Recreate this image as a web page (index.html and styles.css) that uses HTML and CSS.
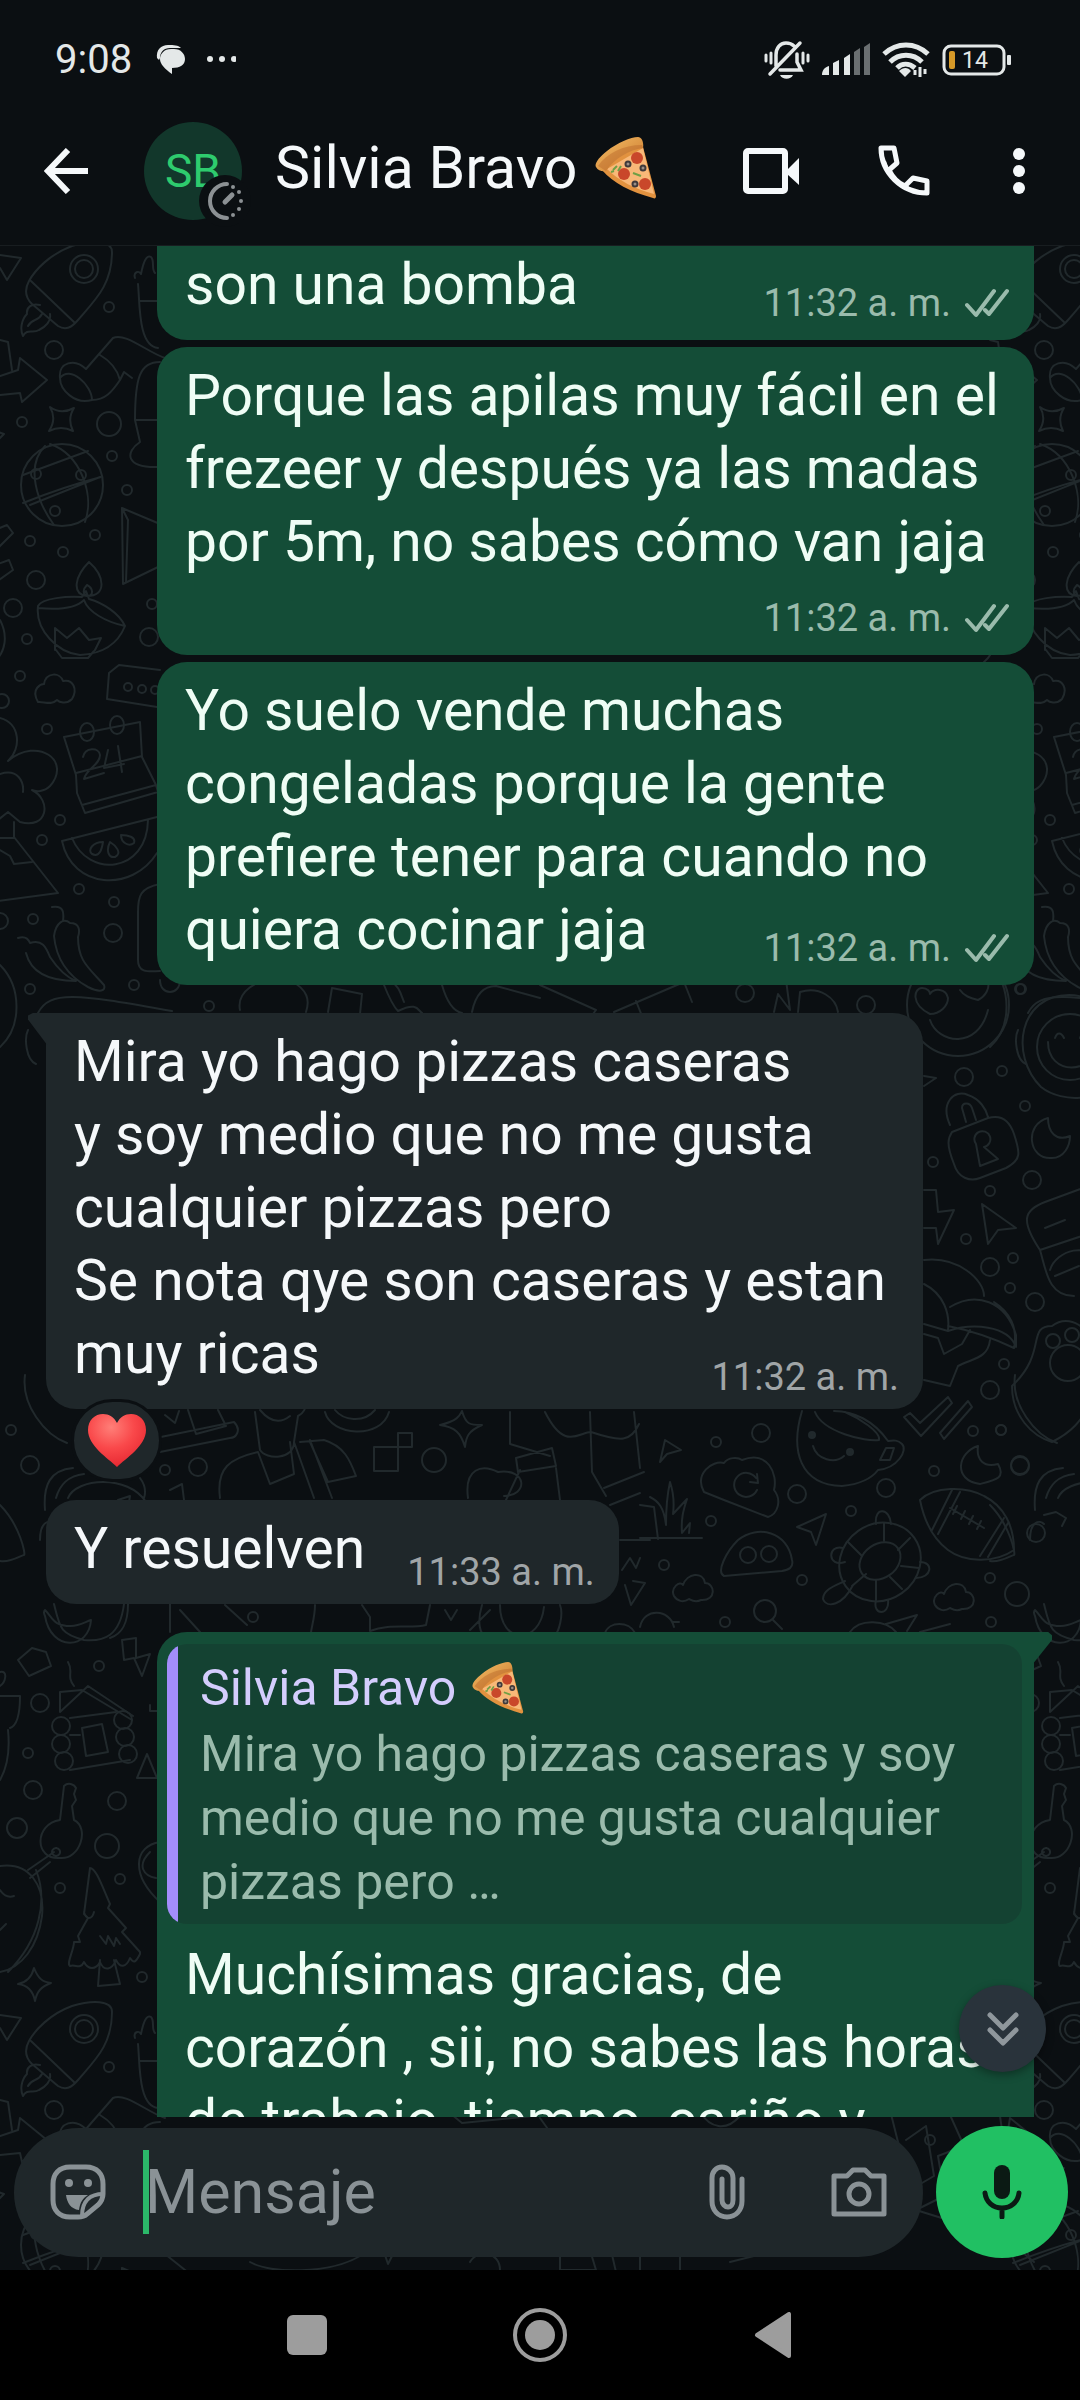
FILE: index.html
```html
<!DOCTYPE html>
<html lang="es">
<head>
<meta charset="utf-8">
<meta name="viewport" content="width=device-width, initial-scale=1">
<title>Silvia Bravo</title>
<link rel="stylesheet" href="styles.css">
</head>
<body>
<svg class="defs" width="0" height="0" aria-hidden="true">
  <defs>
    <linearGradient id="crust" x1="0" y1="0" x2="1" y2="1"><stop offset="0" stop-color="#f6c069"/><stop offset="1" stop-color="#c9762a"/></linearGradient>
    <radialGradient id="heartFill" cx=".4" cy=".25" r=".8"><stop offset="0" stop-color="#ff7f78"/><stop offset=".5" stop-color="#f9484a"/><stop offset="1" stop-color="#e5252f"/></radialGradient>
    <symbol id="pizza" viewBox="0 0 62 62">
      <path d="M5 30 47 6l14 53c0 2-1 3-3 2C36 55 18 46 7 33z" fill="#e2923f"/>
      <path d="M12 32 48 11l11 46C40 52 24 44 12 32z" fill="#f8b878"/>
      <path d="M1 30C-1 27 4 20 12 14 22 6 36 0 43 0c4 0 6 6 5 11C34 13 20 21 11 34c-3 1-8 0-10-4z" fill="url(#crust)"/>
      <path d="M3 29C12 16 28 8 47 8l1 3C34 13 20 21 11 34z" fill="#b9652a" opacity=".45"/>
      <circle cx="42" cy="21" r="6" fill="#c9472a"/><circle cx="29" cy="37" r="6" fill="#c9472a"/><circle cx="50" cy="47" r="6" fill="#c9472a"/>
      <g fill="#9a8f86" stroke="#3f3a3b" stroke-width="2"><circle cx="33" cy="27" r="2.500"/><circle cx="48" cy="31" r="2.500"/><circle cx="40" cy="47" r="2.500"/></g>
      <path d="M18 33l4-4m1 5 3-5m12 7 8 3m-30-4 3-1" stroke="#6f9f45" stroke-width="2" fill="none"/>
    </symbol>
    <symbol id="ticks" viewBox="0 0 44 30">
      <path d="M2 17 11 27 29 3M20 22l4 4L42 3" fill="none" stroke="currentColor" stroke-width="4" stroke-linecap="round" stroke-linejoin="round"/>
    </symbol>
  </defs>
</svg>

<header class="top">
  <div class="status">
    <span class="clock">9:08</span>
    <svg class="notif" width="80" height="32" viewBox="0 0 80 32" fill="#e4e8e8">
      <path d="M1 14C0 6 5 1 12 1c6 0 10 0 13 3H14C8 4 4 8 4 14l-1 2z"/><path d="M15 5h3c7 0 11 5 11 10 0 6-5 9-13 9v6C9 25 4 20 4 15S8 5 15 5z"/>
      <circle cx="54" cy="15" r="3"/><circle cx="66" cy="15" r="3"/><circle cx="78" cy="15" r="3"/>
    </svg>
    <span class="spacer"></span>
    <svg width="46" height="40" viewBox="0 0 46 40" fill="none" stroke="#e4e8e8" stroke-width="3.500" stroke-linecap="round">
      <path d="M12 26V15c0-7 4-12 10-12 4 0 6 1 8 3M33 14v8l4 8H16M6 34 36 3"/><path d="M2 15v6M7 13v10M39 13v10M44 15v6" stroke-width="3"/><path d="M16 35h13c-2 5-11 5-13 0z" fill="#e4e8e8" stroke="none"/>
    </svg>
    <svg width="48" height="34" viewBox="0 0 48 34" fill="#e4e8e8">
      <path d="M0 32c0-5 3-8 7-9v9zM11 32V20l6-3v15zM22 32V15l6-4v21z"/><path d="M32 32V9l6-4v27zM42 32V4l6-4v32z" fill="#6a6f71"/>
    </svg>
    <svg width="48" height="38" viewBox="0 0 48 38" fill="none" stroke="#e4e8e8" stroke-width="5">
      <path d="M2 13c13-12 31-12 44 0M8 21c9-9 23-9 32 0M15 27c5-5 12-5 18 0"/><path d="M17 30c4-4 9-4 12 0l-6 6z" fill="#e4e8e8" stroke="none"/><path d="M33 29v5m5-8v10m5-8v5" stroke-width="3"/>
    </svg>
    <svg width="70" height="32" viewBox="0 0 70 32">
      <rect x="2" y="2" width="60" height="28" rx="7" fill="none" stroke="#e4e8e8" stroke-width="3"/><rect x="7" y="7" width="6" height="18" rx="2" fill="#d79a28"/><rect x="65" y="11" width="4" height="10" rx="1" fill="#e4e8e8"/>
      <text x="20" y="24" font-family="Roboto, sans-serif" font-size="23" fill="#e4e8e8">14</text>
    </svg>
  </div>
  <div class="appbar">
    <button class="icon back" aria-label="Atrás"><svg width="44" height="46" viewBox="0 0 44 46" fill="none" stroke="currentColor" stroke-width="6"><path d="M24 2 4 23l20 21M4 23h40"/></svg></button>
    <div class="avatar"><span>SB</span>
      <svg class="timer" width="52" height="52" viewBox="0 0 52 52"><circle cx="26" cy="26" r="26" fill="#0b0f12"/><path d="M28 9a17 17 0 1 0 0 34" fill="none" stroke="#8c9194" stroke-width="4" stroke-linecap="round"/><path d="m26 27 7-7" stroke="#8c9194" stroke-width="5" stroke-linecap="round"/><g fill="#8c9194"><circle cx="34" cy="12" r="2"/><circle cx="40" cy="17" r="2"/><circle cx="42" cy="26" r="2"/><circle cx="40" cy="34" r="2"/><circle cx="34" cy="40" r="2"/></g></svg>
    </div>
    <h1 class="title">Silvia Bravo <svg class="pizza" role="img" aria-label="pizza"><use href="#pizza"/></svg></h1>
    <span class="spacer"></span>
    <nav class="actions">
      <button class="icon" aria-label="Videollamada"><svg width="56" height="46" viewBox="0 0 56 46"><rect x="3" y="3" width="39" height="40" rx="2" fill="none" stroke="currentColor" stroke-width="6"/><path d="M44 22 56 10v27L44 26z" fill="currentColor"/></svg></button>
      <button class="icon" aria-label="Llamar"><svg width="52" height="52" viewBox="0 0 52 52" fill="none" stroke="currentColor" stroke-width="5" stroke-linejoin="round"><path d="M3 3h13l3 15-8 7c4 8 9 13 16 16l8-8 14 3v12C24 48 3 28 3 3z"/><path d="M10 24 7 16M29 42l8 4" stroke-width="2"/></svg></button>
      <button class="icon" aria-label="Más opciones"><svg width="12" height="46" viewBox="0 0 12 46" fill="currentColor"><circle cx="6" cy="6" r="6"/><circle cx="6" cy="23" r="6"/><circle cx="6" cy="40" r="6"/></svg></button>
    </nav>
  </div>
</header>

<div class="conversation">
  <svg class="wallpaper" aria-hidden="true">
    <g transform="translate(0 -246)" fill="none" stroke="#21292c" stroke-width="2" stroke-linejoin="round" stroke-linecap="round">
      <g id="doodles">
        <path d="M-8 254 21 258 7 280 0 268M72 246C50 254 35 270 29 281c-5 9-3 17 3 23l26 22c8 5 14 1 20-6 17-20 34-35 34-68 0-12-20-12-40-6zM31 281l44 42M40 305c-8-2-14 2-13 9-6 6-7 16-4 22 4-8 10-2 16-6 8-4 12-10 11-16M28 326c4-8 10-4 14-12"/>
        <circle cx="84" cy="269" r="14"/><circle cx="84" cy="269" r="9"/>
        <path d="M135 278c-2-6 4-8 6-4 2-10 5-20 10-17 4 4 0 12 4 16M138 284c2 20 0 62 20 64M140 301h20M60 378c-2-16 15-20 26-9l27-31c12-6 34 14 52 20M60 378c10-13 32 7 32 22-17 5-32-10-32-22zM100 355c12 7 18 17 20 25-8 12-15 20-28 20M120 380l4-8 8 6M0 376l18-6 2-12 27 22-25 22-2-9-20 2M0 340l8 2 4 28M160 362c-20 0-25 15-25 58l5 22c-15 10-15 26 18 25M136 420h22"/>
        <path d="M50 407q11 8 24 1-7 11-1 23-12-6-24 0 8-12 1-24zM-8 430l12 4-8 8"/>
        <circle cx="62" cy="485" r="41"/><path d="M23 475 88 451M30 505l70-28M23 503c30-12 55-20 78-26M45 446c-20 20-8 56 9 79M50 444c30 10 45 50 35 78"/><circle cx="36" cy="474" r="5"/><circle cx="81" cy="475" r="5"/><circle cx="55" cy="511" r="5"/>
        <path d="M160 524 122 508l1 76 35-17M122 508l6 12-2 62M-5 530l12-5 6 8-14 14M-5 565l14-5 4 10-14 10M89 562c-14 14-18 32-2 34 20 0 18-20 2-34zM87 585c-5 5-4 10 1 11 6-1 5-8-1-11zM38 606c4-8 30-10 44-9l4-6 3 8c14 4 30 14 36 27-8 20-25 28-45 29-22-2-45-25-42-49zM38 608c20 2 38 0 46-8 4 12 22 22 41 26M55 650l0-22 12 10 12-10 10 12 12-2-6 12M56 650l6 8h26l6-7M0 620c8 15 6 32-6 42"/>
        <path d="M38 702c-8-14 4-18 6-18 2-12 16-12 19-3 10-2 15 8 9 18-6 6-13 3-15 1-6 6-14 1-19 2zM160 670l-41-5-10 8-2 26 50 8"/><circle cx="128" cy="687" r="4"/><circle cx="142" cy="689" r="4"/><circle cx="155" cy="690" r="4"/>
        <path d="M64 737 140 722l2 35 14 28 2 7-73 21-8-20-1-18zM76 773l66-17M82 805l74-20M83 757c2-10 16-10 17-2 0 10-14 14-16 24l20-6M108 750l-4 18 20-4M118 746l4 26"/><ellipse cx="87" cy="732" rx="7" ry="9"/><ellipse cx="117" cy="725" rx="7" ry="9"/>
        <path d="M0 718c20 5 22 30 8 43 30-25 64 0 42 25-6 6-14 6-18 4 20 10 16 40-12 32l-12-10-10 8M0 774c18-6 24 8 23 18M14 822v15L58 893l-60 8M0 838h14M0 850l10 6 4 8 18-2M62 841l95-24M62 841c10 48 70 52 95 12M72 838c16 40 75 36 76-18M103 842c-10 0-16 8-11 12 8 4 10-6 11-12zM110 842c-4 8-2 16 5 15 8-4 0-12-5-15zM121 835c0 8 8 12 13 8 2-6-6-8-13-8z"/>
        <path d="M52 907c12-2 12 6 11 14M54 936c2-14 10-18 16-13 10 0 10 8 8 14 0 24 10 30 26 48 2 6-4 8-16 2-22-12-32-30-34-51zM18 938c6-2 10 0 12 5 12-4 16 4 20 14 8 12 16 20 26 24-20 0-44-4-50-28M0 965c22 22 22 62 0 82M160 884c-20 4-22 12-22 28v48c0 12 8 12 22 11M38 1013c12-24 42-18 134-2M160 980c0 16 20 16 20 0M240 1010c-4-20 20-30 30-30h20c18 10 20 20 16 32M328 1012l4-24 30 6-2 20M384 985c4 10 8 20 14 26 20-10 20 0 24 2M390 980c10 8 10 12 14 22M442 985c4 14 10 26 20 28M472 1012c4-20 14-26 24-26l44 12M540 985l56 25-6 8M614 1012l70-30 8 20M636 1001l8 20M774 1012l4-18 12 16-4-30M798 1012l2-20c20-6 36 6 38 20M28 1030c-4 8-2 30 8 34"/>
        <circle cx="958" cy="1005" r="51"/><path d="M930 1020c8 24 48 30 58-10M930 1014c-20-10-16-26-8-26 6 0 8 4 8 6 4-6 16-6 18 4 0 8-8 16-18 16zM960 990c4 6 10 8 18 10 8-4 12-12 10-20"/>
        <path d="M1069 995c-50 0-60 60-28 92 20 16 70 20 80-28 4-34-22-64-52-64z"/><circle cx="1070" cy="1047" r="33"/><path d="M1055 1038c2-6 6-6 9 0M1080 1038c2-6 6-6 9 0M1048 1042c0 34 46 34 50 0"/>
        <path d="M950 1125c-10-22 4-36 18-30 12 4 18 14 20 22M966 1122l-4-14c0-6 8-6 10 0l4 12M952 1132l36-14c14-4 22 4 26 16 6 18 8 26-8 34l-26 10c-10 4-22 0-26-14-8-20-6-26-2-32zM976 1144l4 22 18-7-14-12a8 8 0 1 0-8-3zM1048 1118c-24 6-20 42 4 40 12 0 18-12 18-22-14 6-22-4-22-18zM924 1076l12 2-12 8M924 1190h12l2 22 16-2-16 34-2-16h-12M982 1204l34 24-18 2-10 14zM1040 1250c-20-30-16-40 5-48l60-22M1040 1250l60-20M1040 1250c6 20 8 46 34 46M1045 1228l20-8M1055 1276l24-10M1050 1270c6-20 40-30 50-5M924 1260c34-4 60 20 60 36M924 1284c20 10 26 30 24 46M924 1324l24 7c24-8 60-6 68 16l0-12c-10-34-40-44-66-28M948 1326c20 4 45 12 66 22 4-20-4-36-20-46M924 1334l14 4 6 16 18-10 8-14M924 1380l26 6 8-20c16-8 30-8 32-26M1012 1386c36-34 14-60 40-60 18-14 40 4 38 20M1012 1386c0 30 20 50 40 56 20-10 28-20 40-40"/><circle cx="1053" cy="1341" r="7"/><circle cx="1072" cy="1335" r="7"/><circle cx="1068" cy="1363" r="18"/>
        <path d="M904 1417l6-4 10 10 28-26 4 6-31 33zM940 1433l28-32 4 6-28 32zM802 1411c-12 40-2 74 40 75 20-2 30-8 36-16 20-2 30-20 24-26-4-4-8-4-14-3-14-20-34-30-54-30M815 1412c8 20 50 30 64 28 2-8-20-22-34-28M813 1446c4 14 22 18 31 10M880 1460l6-12h8l-4 12z"/><circle cx="812" cy="1435" r="3" fill="#21292c"/><circle cx="850" cy="1452" r="3" fill="#21292c"/>
        <path d="M665 1440l16 10-14 4-7 8zM704 1492c-10-18 8-32 20-29 4-6 14-6 18-3 26-10 36 14 32 30 8 10 4 24-6 27l-44-17zM756 1478a12 12 0 1 0 1 12M757 1474l1 9-8-1M724 1576c-8-4 2-24 14-36 20-16 50-8 54 20 2 8-4 10-10 11z"/><circle cx="748" cy="1555" r="8"/><circle cx="769" cy="1554" r="8"/>
        <path d="M640 1505l14 2 4 32M650 1497c8 4 14 10 16 28 0-20 2-34 4-43 4 12 4 24 3 32l14-15c-4 12-6 20-5 34l8-10-1 10M640 1538h62"/>
        <path d="M674 1596c-4-8 6-16 9-11 4-12 20-14 22-2 10 0 12 18-4 17-6 3-10 0-12-1-6 4-12 2-15-3zM935 1605c-4-8 6-16 9-11 4-12 20-14 22-2 10 0 12 18-4 17-6 3-10 0-12-1-6 4-12 2-15-3z"/><circle cx="765" cy="1611" r="11"/><path d="M773 1620l9 9M797 1527l29-13-10 31-5-13zM640 1627c4-20 30-18 34 0M673 1622h6M978 1446c-20 6-26 34 2 38 16-4 26-6 18-20-14 4-22-4-20-18M920 1500c14-14 46-14 64-4 20 10 30 30 30 54-20 14-50 12-66 0-16-12-24-30-28-50zM952 1490l-20 40M960 1492l-22 42M980 1556l24-38M988 1557l20-34M950 1508l34 20M957 1506l-4 8M965 1511l-4 8M973 1516l-4 8M981 1521l-4 8"/>
        <ellipse cx="880" cy="1562" rx="42" ry="38" transform="rotate(-35 880 1562)"/><ellipse cx="880" cy="1561" rx="22" ry="17" transform="rotate(-35 880 1561)"/><path d="M884 1541v-18M898 1550l12-12M901 1566l18 2M890 1577l12 12M876 1580v20M866 1574l-14 12M862 1556l-14-14M876 1524c-2-18 14-16 15 0M845 1562c-18 6-18-18-2-14M853 1585c-10 20-26 24-30 14 0-10 14-14 22-18M876 1600c-4 16 14 16 12 0M916 1578c16 0 18-16 4-16M850 1632c10-14 36-12 46 0M886 1624l31-9-10 16M920 1632l30-8"/>
        <path d="M25 1375c-4 30 20 60 42 68M0 1505c20 20 26 50 24 50s-14 8-24 6M45 1510c-2-25 5-40 28-42M56 1498c4-14 12-22 28-24M140 1478c6 8 6 14 4 20M68 1498c8-20 60-24 78 4M118 1500l12-4-2 12M170 1490l12-6 2 16M40 1540c0-20 10-20 14-16M54 1515l12-3 10 6-4 8M156 1438l78-16c8 8 2 16-4 16l-70 14M165 1415l10 8 4-12M188 1410l8 24 30-8-8-16M255 1412l5 38c6 10 34 10 34-8l4-26c12-6 8-20-6-18M220 1498c-4-30 10-40 38-46l12 32 24-10-4-32M300 1442l24-2c20 6 26 20 32 36l-28 6-18-40M294 1442l20 56M310 1440l22 58M260 1410c10 12 20 14 30 6M325 1412c6 24 56 28 64 0M335 1410c8 10 28 14 40 0"/><path d="M374 1447h24v24h-24zM398 1433h14v14h-14zM440 1425c18-4 20-10 22-14 4 14 8 14 20 14-14 6-16 12-17 22-4-14-10-20-25-22zM510 1412v32l40 12M516 1458l36-10 4 18-38 6zM520 1470l-14 30M556 1468l4 32M468 1498c-4-30 14-34 30-26 30-4 30 24 6 24M590 1412l2 60 14 24M634 1412l6 56M545 1412c20 40 34 20 46 20 30 10 40 10 48-8M604 1488l40-16M610 1505l30-12M620 1540h30M622 1570l8-12 6 10 4-10M625 1585l6 20 14-22-12-2"/>
        <path d="M54 1604c6 24 6 30 30 36 20 2 36-4 40-36M128 1604c0 20-6 30-18 34M45 1610c8 8 8 16 26 16 8 0 14-4 20-6-2 30-40 32-46-4-2-4 0-6 0-6zM170 1604v28M180 1610l20 22M225 1605l22 20M315 1605c0 12-4 24-4 28M362 1605l8 12v14c20-8 40-2 56-6l4-20M445 1610l6 10 6-10M470 1630l20-20M482 1605c-6 20 0 28 0 28M560 1605c4 10-2 28-4 28M500 1605c0 40 40 40 44 2M605 1633c4-12 24-12 30 0"/>
        <path d="M18 1660l14-12 14 4 5 14-22 10zM0 1672c8-2 6 10 0 14M122 1640l14-2v20l14-4-8 22-8-18-10 2zM68 1662c6 10-2 14 6 24M60 1692l22-2 50 30M60 1692v20l28-26 45 30M70 1718l46-6M70 1735h10M70 1770l60-10M82 1728l20-4 6 28-22 4zM0 1696h20c0 20-4 30-10 32M0 1780c8-14 10-30 8-50M150 1705v6h7M137 1778h20l-10-24z"/><circle cx="61" cy="1726" r="9"/><circle cx="123" cy="1720" r="9"/><circle cx="61" cy="1744" r="9"/><circle cx="125" cy="1737" r="9"/><circle cx="64" cy="1761" r="9"/><circle cx="128" cy="1754" r="9"/>
        <path d="M60 1820l4-34c4-4 10-2 12 2l-2 6 2 6-4 6 2 14c16 8 6 40-14 38-26 2-26-34 0-38zM56 1848a4 4 0 1 0 .1 0M54 1852l-26 18M50 1862l-20 16M0 1866c30-4 45 20 42 50-4 30-20 52-42 56M36 1870c12 30 4 70-28 102M0 1930l6-6M0 1890c4 6 8 8 14 6M160 1842c-26 4-30 32 0 60M150 1852c-14 14-6 24 6 26"/>
        <path d="M90 1868c6 0 12 18 20 36l-2 4 18 20-4 4 18 20 0 2c-4 8-6 10-10 4-4 10-10 10-14 2-4 10-12 12-16 2-4 8-12 8-16 0-4 8-8 2-14 4-4-2 4-16 4-24l6 0-2-6 10-18-4-4zM100 1960l-2 26 22-2-6-24M84 1912c2 8 8 8 10 0M100 1936l6 8 2-8 6 10 2-8 4 6M34 1968c4 10 8 14 17 15-10 4-14 8-16 18-2-10-8-16-17-17 10-2 14-8 16-16z"/>
        <path d="M240 2030h60v60h-60zM440 2105l22 18 80-8M540 2118l10 14M610 2020c20-10 40 6 50-12M700 2112c10 16 26 20 40 4M890 2110l20 80 24-14-8-50-20 14M946 2106l18 40-26 10 4 24M916 2210l40-20-8 30zM970 2240c-20-10-10-30 4-28l60 50M250 2262c20 12 80 12 110-6M560 2250h30l6 20h-36zM610 2246l6 26M640 2250v22M680 2250v22M160 2250l30 24M730 2262l40-10M380 2240l8 24 10-20M470 2262c8-14 30-10 30 8"/>
        <g><circle cx="109" cy="307" r="5"/><circle cx="54" cy="350" r="9"/><circle cx="22" cy="422" r="5"/><circle cx="109" cy="424" r="12"/><circle cx="112" cy="456" r="5"/><circle cx="127" cy="490" r="5"/><circle cx="95" cy="535" r="5"/><circle cx="30" cy="541" r="5"/><circle cx="63" cy="552" r="5"/><circle cx="36" cy="580" r="9"/><circle cx="13" cy="608" r="9"/><circle cx="152" cy="604" r="5"/><circle cx="149" cy="637" r="9"/><circle cx="27" cy="639" r="5"/><circle cx="20" cy="676" r="5"/><circle cx="2" cy="701" r="7"/><circle cx="47" cy="729" r="5"/><circle cx="60" cy="820" r="5"/><circle cx="42" cy="840" r="5"/><circle cx="79" cy="889" r="5"/><circle cx="114" cy="902" r="5"/><circle cx="33" cy="919" r="5"/><circle cx="113" cy="933" r="9"/><circle cx="0" cy="921" r="8"/><circle cx="134" cy="985" r="5"/><circle cx="30" cy="989" r="5"/><circle cx="209" cy="1006" r="5"/><circle cx="745" cy="993" r="9"/><circle cx="866" cy="1005" r="9"/><circle cx="1021" cy="989" r="5"/><circle cx="964" cy="1077" r="9"/><circle cx="1002" cy="1071" r="5"/><circle cx="1025" cy="1106" r="5"/><circle cx="933" cy="1162" r="5"/><circle cx="1032" cy="1180" r="9"/><circle cx="990" cy="1191" r="5"/><circle cx="966" cy="1239" r="5"/><circle cx="1013" cy="1258" r="5"/><circle cx="990" cy="1267" r="9"/><circle cx="1010" cy="1288" r="5"/><circle cx="1035" cy="1302" r="9"/><circle cx="1004" cy="1364" r="5"/><circle cx="990" cy="1390" r="9"/><circle cx="973" cy="1431" r="5"/><circle cx="1001" cy="1430" r="5"/><circle cx="761" cy="1433" r="9"/><circle cx="716" cy="1442" r="5"/><circle cx="797" cy="1494" r="9"/><circle cx="886" cy="1488" r="9"/><circle cx="851" cy="1511" r="5"/><circle cx="711" cy="1521" r="5"/><circle cx="664" cy="1565" r="5"/><circle cx="802" cy="1580" r="5"/><circle cx="725" cy="1622" r="5"/><circle cx="934" cy="1471" r="5"/><circle cx="1020" cy="1466" r="9"/><circle cx="1036" cy="1533" r="9"/><circle cx="990" cy="1578" r="5"/><circle cx="1017" cy="1594" r="12"/><circle cx="991" cy="1622" r="5"/><circle cx="30" cy="1465" r="9"/><circle cx="11" cy="1430" r="5"/><circle cx="165" cy="1470" r="5"/><circle cx="198" cy="1467" r="9"/><circle cx="434" cy="1460" r="12"/><circle cx="253" cy="1617" r="5"/><circle cx="99" cy="1666" r="5"/><circle cx="40" cy="1703" r="9"/><circle cx="28" cy="1753" r="5"/><circle cx="33" cy="1790" r="9"/><circle cx="117" cy="1801" r="9"/><circle cx="17" cy="1828" r="10"/><circle cx="107" cy="1846" r="12"/><circle cx="60" cy="1888" r="5"/><circle cx="120" cy="1879" r="5"/><circle cx="142" cy="1977" r="5"/><circle cx="930" cy="2140" r="5"/></g>
      </g>
      <use href="#doodles" x="990"/><use href="#doodles" y="1760"/><use href="#doodles" x="990" y="1760"/>
    </g>
  </svg>

  <main class="chat">
    <article class="bubble sent continued">
      <p class="text">son una bomba</p>
      <div class="meta"><time>11:32 a. m.</time><svg class="ticks"><use href="#ticks"/></svg></div>
    </article>
    <article class="bubble sent stacked">
      <p class="text">Porque las apilas muy fácil en el frezeer y después ya las madas por 5m, no sabes cómo van jaja</p>
      <div class="meta"><time>11:32 a. m.</time><svg class="ticks"><use href="#ticks"/></svg></div>
    </article>
    <article class="bubble sent">
      <p class="text">Yo suelo vende muchas congeladas porque la gente prefiere tener para cuando no quiera cocinar jaja</p>
      <div class="meta"><time>11:32 a. m.</time><svg class="ticks"><use href="#ticks"/></svg></div>
    </article>
    <article class="bubble received first">
      <p class="text">Mira yo hago pizzas caseras<br>y soy medio que no me gusta cualquier pizzas pero<br>Se nota qye son caseras y estan muy ricas</p>
      <div class="meta"><time>11:32 a. m.</time></div>
    </article>
    <button class="reaction" aria-label="Reacción: corazón"><svg width="58" height="54" viewBox="0 0 58 54"><path d="M29 53C20 44 0 32 0 16 0 6 7 0 15 0c6 0 11 3 14 9C32 3 37 0 43 0c8 0 15 6 15 16 0 16-20 28-29 37z" fill="url(#heartFill)"/></svg></button>
    <article class="bubble received inline">
      <p class="text">Y resuelven</p>
      <div class="meta"><time>11:33 a. m.</time></div>
    </article>
    <article class="bubble sent first quoted">
      <blockquote class="quote">
        <cite>Silvia Bravo <svg class="pizza" role="img" aria-label="pizza"><use href="#pizza"/></svg></cite>
        <p>Mira yo hago pizzas caseras y soy medio que no me gusta cualquier pizzas pero …</p>
      </blockquote>
      <p class="text">Muchísimas gracias, de<br>corazón , sii, no sabes las horas<br>de trabajo, tiempo, cariño y</p>
    </article>
  </main>
  <button class="jump" aria-label="Ir al final"><svg width="34" height="36" viewBox="0 0 34 36" fill="none" stroke="#8f979c" stroke-width="5" stroke-linecap="round" stroke-linejoin="round"><path d="M4 4l13 13L30 4M4 19l13 13 13-13"/></svg></button>

  <form class="composer">
    <div class="field">
      <button class="tool" type="button" aria-label="Stickers"><svg width="56" height="56" viewBox="0 0 56 56" fill="none" stroke="currentColor" stroke-width="5"><path d="M20 3h16c11 0 17 7 17 17v10c0 5-2 8-5 11L37 50c-3 3-6 3-9 3h-8C9 53 3 46 3 36V20C3 10 9 3 20 3z"/><path d="M53 30c-12 0-21 6-21 22" stroke-width="4"/><path d="M16 31h22c-5 3-8 7-9 15-8-1-12-7-13-15z" fill="currentColor" stroke="none"/><circle cx="19" cy="19" r="4" fill="currentColor" stroke="none"/><circle cx="38" cy="19" r="4" fill="currentColor" stroke="none"/></svg></button>
      <span class="caret"></span>
      <input class="input" type="text" placeholder="Mensaje" aria-label="Mensaje">
      <button class="tool" type="button" aria-label="Adjuntar"><svg width="36" height="56" viewBox="0 0 36 56" fill="none" stroke="currentColor" stroke-width="5" stroke-linecap="round"><path d="M33 15v22c0 9-6 16-15 16S3 46 3 37V14C3 8 7 3 13 3s11 5 11 11v22c0 4-2 7-5 7s-6-3-6-7V15"/></svg></button>
      <button class="tool" type="button" aria-label="Cámara"><svg width="56" height="50" viewBox="0 0 56 50" fill="none" stroke="currentColor" stroke-width="5" stroke-linejoin="round"><path d="M3 9h13l6-6h12l6 6h13v38H3z"/><circle cx="28" cy="27" r="10"/></svg></button>
    </div>
    <button class="mic" type="button" aria-label="Mensaje de voz"><svg width="40" height="54" viewBox="0 0 40 54"><rect x="12" y="0" width="16" height="34" rx="8" fill="#0b1a14"/><path d="M3 28c1 9 8 15 17 15s16-6 17-15M20 43v9" fill="none" stroke="#0b1a14" stroke-width="5" stroke-linecap="round"/></svg></button>
  </form>
</div>

<nav class="system">
  <button aria-label="Recientes"><svg width="40" height="40"><rect width="40" height="40" rx="6" fill="#9d9d9d"/></svg></button>
  <button aria-label="Inicio"><svg width="54" height="54" viewBox="0 0 54 54"><circle cx="27" cy="27" r="25" fill="none" stroke="#9d9d9d" stroke-width="4"/><circle cx="27" cy="27" r="15" fill="#9d9d9d"/></svg></button>
  <button aria-label="Volver"><svg width="38" height="46" viewBox="0 0 38 46"><path d="M35 2v42L3 23z" fill="#9d9d9d" stroke="#9d9d9d" stroke-width="4" stroke-linejoin="round"/></svg></button>
</nav>
</body>
</html>
```
FILE: styles.css
```css
* { box-sizing: border-box; }

body {
  margin: 0;
  height: 100vh;
  display: flex;
  flex-direction: column;
  background: #0b0f12;
  color: #f5f8fa;
  font-family: Roboto, "Noto Sans", sans-serif;
}

button {
  padding: 0;
  border: 0;
  background: none;
  color: inherit;
  display: flex;
  align-items: center;
  justify-content: center;
}

svg { display: block; flex: none; }
.defs { position: absolute; }
.spacer { flex: 1; }

/* Header */
.top { border-bottom: 1px solid #181d20; }

.status {
  display: flex;
  align-items: center;
  gap: 12px;
  height: 120px;
  padding: 0 68px 0 55px;
}
.clock { font-size: 40px; line-height: 48px; color: #e4e8e8; }
.notif { margin-left: 12px; }

.appbar {
  display: flex;
  align-items: center;
  height: 101px;
  margin-bottom: 24px;
  padding: 0 55px 0 44px;
}
.back { margin-right: 56px; }
.avatar {
  position: relative;
  display: flex;
  align-items: center;
  justify-content: center;
  width: 98px;
  height: 98px;
  margin-right: 33px;
  border-radius: 50%;
  background: #12372b;
  color: #2ecb6e;
  font-size: 46px;
}
.timer { position: absolute; right: -9px; bottom: -7px; }
.title {
  display: flex;
  align-items: center;
  gap: 18px;
  margin: 0;
  padding-bottom: 6px;
  font-size: 59px;
  font-weight: 400;
  line-height: 72px;
}
.title .pizza { width: 62px; height: 64px; }
.actions { display: flex; align-items: center; gap: 79px; }
.actions .icon:last-child { margin-left: 4px; }

/* Conversation */
.conversation {
  position: relative;
  flex: 1;
  min-height: 0;
  display: flex;
  flex-direction: column;
  overflow: hidden;
}
.wallpaper {
  position: absolute;
  inset: 0;
  width: 100%;
  height: 100%;
}

.chat {
  position: relative;
  flex: 1;
  min-height: 0;
  display: flex;
  flex-direction: column;
  padding: 0 46px;
  overflow: hidden;
}
.bubble {
  position: relative;
  flex: none;
  display: grid;
  width: 877px;
  max-width: 89%;
  padding: 12px 28px 10px;
  border-radius: 30px;
}
.bubble > * { grid-area: 1 / 1; }
.sent {
  align-self: flex-end;
  margin-top: 7px;
  padding-bottom: 15px;
  background: #144d37;
  color: #effdf5;
}
.received {
  align-self: flex-start;
  background: #1f272a;
}
.first { margin-top: 28px; }
.continued {
  margin-top: 0;
  padding-top: 2px;
  border-radius: 0 0 30px 30px;
}
.stacked { display: flex; flex-direction: column; gap: 14px; }
.inline {
  display: flex;
  gap: 42px;
  width: auto;
  margin-top: 18px;
}

.first::after {
  content: "";
  position: absolute;
  top: 0;
  width: 48px;
  height: 32px;
  background: inherit;
}
.received.first::after {
  left: -18px;
  clip-path: polygon(10% 0, 100% 0, 100% 100%, 40% 100%, 0 20%, 0 8%);
}
.sent.first::after {
  right: -18px;
  clip-path: polygon(0 0, 92% 0, 100% 10%, 100% 25%, 60% 100%, 0 100%);
}

.text {
  margin: 0 0 9px;
  font-size: 57px;
  line-height: 73px;
}
.sent .text { margin-bottom: 4px; }
.meta {
  display: flex;
  align-items: center;
  align-self: end;
  justify-self: end;
  gap: 14px;
  font-size: 38px;
  line-height: 44px;
  color: #a0a5a7;
}
.stacked .meta { align-self: flex-end; }
.sent .meta { margin-right: -3px; color: #9abbac; }
.received .meta { margin-right: -4px; }
.ticks { width: 44px; height: 30px; }

.reaction {
  position: relative;
  flex: none;
  width: 91px;
  height: 83px;
  margin: -10px 0 0 25px;
  border: 3px solid #0b0f12;
  border-radius: 42px;
  background: #1f272a;
}

.quoted { display: block; padding: 12px 10px; }
.quoted .text { padding: 0 18px; }
.quote {
  position: relative;
  z-index: 1;
  margin: 0 2px 14px 0;
  padding: 12px 22px 10px 33px;
  border-radius: 20px;
  background: linear-gradient(90deg, #a38dfb 11px, #144232 11px);
  font-size: 50px;
  line-height: 64px;
  color: #9abbac;
}
.quote cite {
  display: flex;
  align-items: center;
  gap: 16px;
  margin-bottom: 2px;
  font-style: normal;
  color: #d4cdfd;
}
.quote .pizza { width: 52px; height: 52px; }
.quote p { margin: 0; }

.jump {
  position: absolute;
  right: 34px;
  bottom: 198px;
  width: 87px;
  height: 87px;
  border-radius: 50%;
  background: #29333b;
  box-shadow: 0 3px 8px rgba(0, 0, 0, .35);
}

/* Composer */
.composer {
  position: relative;
  display: flex;
  align-items: center;
  gap: 13px;
  padding: 9px 12px 12px 14px;
}
.field {
  flex: 1;
  min-width: 0;
  display: flex;
  align-items: center;
  height: 129px;
  padding: 0 36px;
  border-radius: 65px;
  background: #1f272a;
}
.tool { color: #8a9296; }
.caret {
  width: 6px;
  height: 84px;
  margin-left: 37px;
  background: #2bb869;
}
.input {
  flex: 1;
  min-width: 0;
  height: 84px;
  margin-left: -4px;
  padding: 0;
  border: 0;
  outline: 0;
  background: none;
  color: #f5f8fa;
  font: inherit;
  font-size: 61px;
}
.input::placeholder { color: #8a9296; opacity: 1; }
.tool + .tool { margin-left: 86px; }
.mic {
  flex: none;
  width: 132px;
  height: 132px;
  border-radius: 50%;
  background: #21c063;
}

/* System navigation */
.system {
  display: flex;
  align-items: center;
  justify-content: center;
  gap: 153px;
  height: 130px;
  background: #000;
}
.system button { width: 80px; height: 80px; }
```
